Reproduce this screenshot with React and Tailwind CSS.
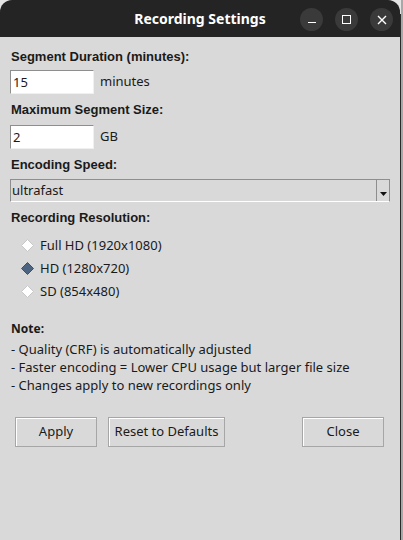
import React, { useState } from "react";

const labelFont = { fontFamily: '"Liberation Sans", Arial, sans-serif' };

function Diamond({ checked }) {
  return (
    <svg width="13" height="13" viewBox="0 0 13 13" className="shrink-0">
      <polygon
        points="6.5,0.5 12.5,6.5 6.5,12.5 0.5,6.5"
        fill={checked ? "#4d6481" : "#ffffff"}
        stroke={checked ? "#3e526b" : "#c8c8c8"}
        strokeWidth="1"
      />
    </svg>
  );
}

function TkButton({ children, className = "" }) {
  return (
    <button
      className={`h-[30px] border border-[#a6a6a6] bg-[#d9d9d9] shadow-[inset_1px_1px_0_#ffffff] text-[13px] text-[#1a1a1a] font-['Noto_Sans',sans-serif] ${className}`}
    >
      {children}
    </button>
  );
}

export default function App() {
  const [resolution, setResolution] = useState("hd");

  // Resolution options shown as Tk radio buttons
  const options = [
    { id: "full", label: "Full HD (1920x1080)" },
    { id: "hd", label: "HD (1280x720)" },
    { id: "sd", label: "SD (854x480)" },
  ];

  return (
    <div className="w-[403px] h-[540px] bg-[#e4e4e4] flex overflow-hidden">
      <div className="w-[400px] h-full flex flex-col rounded-t-[12px] overflow-hidden bg-[#d9d9d9]">
        {/* Title bar */}
        <div className="h-[37px] bg-[#242424] flex items-center relative shrink-0">
          <div className="flex-1 text-center text-white text-[14px] font-bold font-['Noto_Sans',sans-serif]">
            Recording Settings
          </div>
          <div className="absolute right-[7px] top-[8px] flex gap-[12px]">
            <div className="w-[23px] h-[23px] rounded-full bg-[#3a3a3a] flex items-center justify-center">
              <div className="w-[8px] h-[1px] bg-white mt-[6px]" />
            </div>
            <div className="w-[23px] h-[23px] rounded-full bg-[#3a3a3a] flex items-center justify-center">
              <div className="w-[9px] h-[9px] border border-white" />
            </div>
            <div className="w-[23px] h-[23px] rounded-full bg-[#3a3a3a] flex items-center justify-center">
              <svg width="10" height="10" viewBox="0 0 10 10">
                <path d="M1 1L9 9M9 1L1 9" stroke="white" strokeWidth="1.4" />
              </svg>
            </div>
          </div>
        </div>

        {/* Body */}
        <div className="flex-1 px-[10px] pt-[10px] text-[#1a1a1a]">
          <div className="text-[13px] font-bold leading-[20px] pl-[1px]" style={labelFont}>
            Segment Duration (minutes):
          </div>
          <div className="flex items-center mt-[3px] gap-[6px]">
            <div className="w-[84px] h-[24px] bg-white border border-t-[#8e8e8e] border-l-[#8e8e8e] border-b-[#f0f0f0] border-r-[#f0f0f0] text-[13px] leading-[22px] pl-[2px] font-['Noto_Sans',sans-serif]">
              15
            </div>
            <span className="text-[13px] font-['Noto_Sans',sans-serif]">minutes</span>
          </div>

          <div className="text-[13px] font-bold leading-[20px] pl-[1px] mt-[6px]" style={labelFont}>
            Maximum Segment Size:
          </div>
          <div className="flex items-center mt-[5px] gap-[6px]">
            <div className="w-[84px] h-[24px] bg-white border border-t-[#8e8e8e] border-l-[#8e8e8e] border-b-[#f0f0f0] border-r-[#f0f0f0] text-[13px] leading-[22px] pl-[2px] font-['Noto_Sans',sans-serif]">
              2
            </div>
            <span className="text-[13px] font-['Noto_Sans',sans-serif]">GB</span>
          </div>

          <div className="text-[13px] font-bold leading-[20px] pl-[1px] mt-[6px]" style={labelFont}>
            Encoding Speed:
          </div>
          <div className="mt-[4px] w-[380px] h-[23px] flex border border-t-[#8e8e8e] border-l-[#8e8e8e] border-b-white border-r-[#8e8e8e]">
            <div className="flex-1 bg-[#d9d9d9] text-[13px] leading-[21px] pl-[1px] font-['Noto_Sans',sans-serif]">
              ultrafast
            </div>
            <div className="w-[13px] border-l border-l-[#8e8e8e] bg-[#d9d9d9] flex items-end justify-center pb-[5px]">
              <svg width="7" height="4" viewBox="0 0 7 4">
                <polygon points="0,0 7,0 3.5,4" fill="#111" />
              </svg>
            </div>
          </div>

          <div className="text-[13px] font-bold leading-[20px] pl-[1px] mt-[6px]" style={labelFont}>
            Recording Resolution:
          </div>
          <div className="flex flex-col pl-[11px] mt-[6px]">
            {options.map((o) => (
              <label
                key={o.id}
                onClick={() => setResolution(o.id)}
                className="flex items-center gap-[6px] h-[23px] cursor-default"
              >
                <Diamond checked={resolution === o.id} />
                <span className="text-[13px] font-['Noto_Sans',sans-serif]">{o.label}</span>
              </label>
            ))}
          </div>

          <div className="mt-[17px] text-[12px] font-bold leading-[18px] pl-[1px] font-['Noto_Sans',sans-serif]">
            Note:
          </div>
          <div className="text-[13px] leading-[18px] pl-[1px] mt-[2px] font-['Noto_Sans',sans-serif]">
            <div>- Quality (CRF) is automatically adjusted</div>
            <div>- Faster encoding = Lower CPU usage but larger file size</div>
            <div>- Changes apply to new recordings only</div>
          </div>

          {/* Buttons */}
          <div className="flex mt-[23px] pl-[5px] pr-[6px]">
            <TkButton className="w-[82px]">Apply</TkButton>
            <TkButton className="w-[117px] ml-[11px]">Reset to Defaults</TkButton>
            <div className="flex-1" />
            <TkButton className="w-[82px]">Close</TkButton>
          </div>
        </div>
      </div>
      <div className="w-[1px] h-full bg-[#2a2a2a] mt-[14px]" />
      <div className="w-[2px] h-full bg-[#a8a8a8]" />
    </div>
  );
}
